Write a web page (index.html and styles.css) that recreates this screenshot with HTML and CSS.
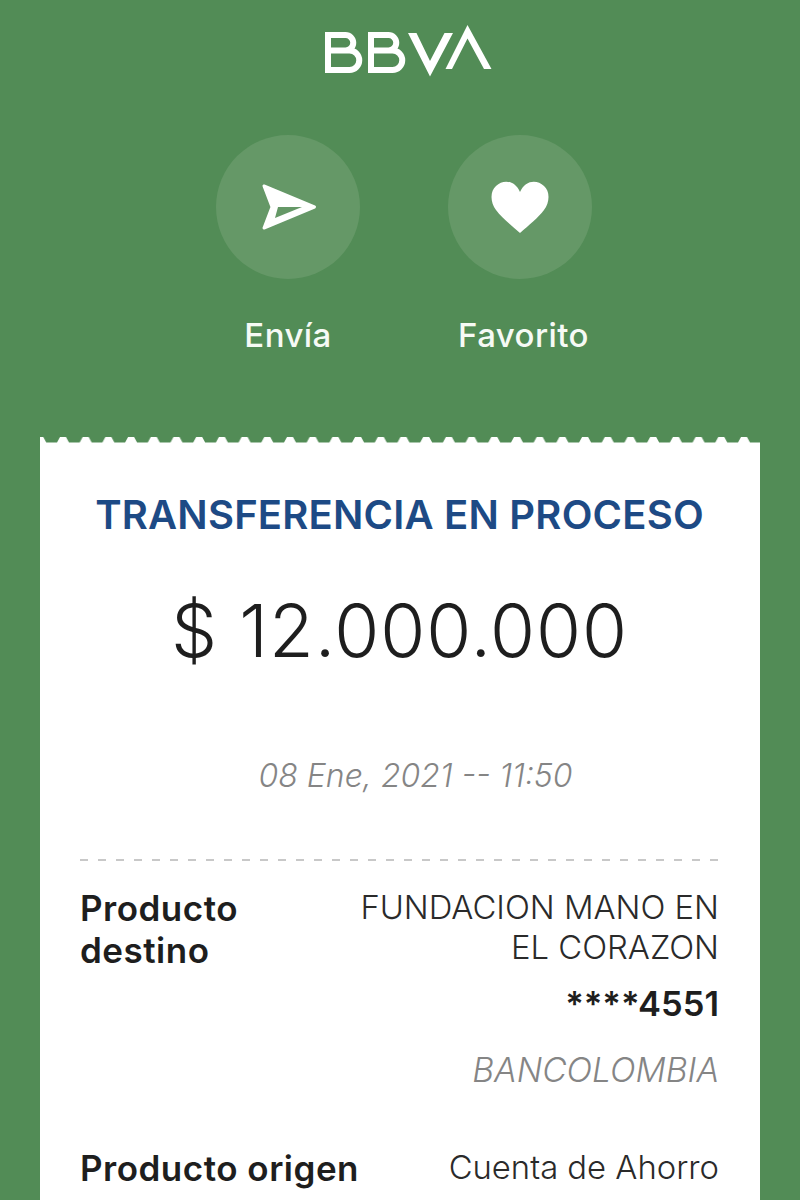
FILE: index.html
```html
<!DOCTYPE html>
<html lang="es">
<head>
<meta charset="utf-8">
<title>BBVA</title>
<link rel="stylesheet" href="styles.css">
</head>
<body>
<main class="screen">
  <header class="brand">
    <svg class="logo" width="168" height="52" viewBox="0 0 168 52" aria-label="BBVA">
      <g fill="none" stroke="#fff" stroke-width="6">
        <path d="M4 10h17.500a7.750 7.750 0 0 1 0 15.500h-17.500zM4 25.500h21.500a9.750 9.750 0 0 1 0 19.500h-21.500z"/>
        <path d="M47 10h17.500a7.750 7.750 0 0 1 0 15.500h-17.500zM47 25.500h21.500a9.750 9.750 0 0 1 0 19.500h-21.500z"/>
      </g>
      <path fill="#fff" d="M84 8h8.500L106 36 120.500 8h8.500L106 51.500z"/>
      <path fill="#fff" d="M143.500 0L167.500 44h-7.500L143.500 13.500 128 44h-6.500z"/>
    </svg>
  </header>
  <nav class="actions">
    <div class="action">
      <span class="circle">
        <svg width="58" height="48" viewBox="0 0 58 48"><path fill="#fff" stroke="#fff" stroke-width="3" stroke-linejoin="round" d="M5 3 L55.500 24 L5 45 L13 24 Z"/><path fill="#659867" d="M19 24 L43 24 L16 35 Z"/></svg>
      </span>
      <span class="label">Envía</span>
    </div>
    <div class="action">
      <span class="circle">
        <svg width="58" height="52" viewBox="0 0 58 52"><path fill="#fff" d="M29 52C20 44 11 37 5 29C-1 21-1 10 5 5C12-2 24-1 29 11C34-1 46-2 53 5C59 10 59 21 53 29C47 37 38 44 29 52Z"/></svg>
      </span>
      <span class="label label-wide">Favorito</span>
    </div>
  </nav>
  <section class="receipt">
    <svg class="teeth" width="720" height="6" aria-hidden="true">
      <defs>
        <pattern id="scallop" width="22.7" height="6" patternUnits="userSpaceOnUse" x="14">
          <path fill="#fff" d="M0 6V5.500H3L6 0H12L15 5.500H22.700V6Z"/>
        </pattern>
      </defs>
      <rect width="720" height="6" fill="url(#scallop)"/>
    </svg>
    <div class="sheet">
      <h1 class="title">TRANSFERENCIA EN PROCESO</h1>
      <p class="amount">$ 12.000.000</p>
      <p class="date">08 Ene, 2021 -- 11:50</p>
      <div class="divider"></div>
      <div class="row">
        <div class="key">Producto destino</div>
        <div class="val">
          <div class="name">FUNDACION MANO EN EL CORAZON</div>
          <div class="acct">****4551</div>
          <div class="bank">BANCOLOMBIA</div>
        </div>
      </div>
      <div class="row row-next">
        <div class="key key-line">Producto origen</div>
        <div class="val"><div class="name">Cuenta de Ahorro</div></div>
      </div>
    </div>
  </section>
</main>
</body>
</html>
```
FILE: styles.css
```css
html, body { margin: 0; padding: 0; height: 100%; overflow: hidden; }
body { background: #528c56; font-family: "Inter", "Liberation Sans", sans-serif; }
.screen { display: flex; flex-direction: column; height: 100vh; overflow: hidden; }
.brand { display: flex; justify-content: center; padding: 25px 0 0 16px; }
.logo { display: block; }
.actions { display: flex; justify-content: center; gap: 88px; margin-top: 58px; padding-left: 8px; }
.action { display: flex; flex-direction: column; align-items: center; width: 144px; gap: 36px; }
.circle { width: 144px; height: 144px; border-radius: 50%; background: #659867; display: flex; align-items: center; justify-content: center; }
.label { color: #f6faf5; font-size: 33px; line-height: 40px; font-weight: 500; letter-spacing: 0.4px; white-space: nowrap; }
.label-wide { padding-left: 7px; }
.receipt { display: flex; flex-direction: column; flex: 1; min-height: 0; margin: 82px 40px 0; }
.teeth { display: block; flex: none; }
.sheet { flex: 1; background: #fff; padding: 0 41px 0 40px; }
.title { margin: 0; padding-top: 48px; text-align: center; color: #1d4a85; font-size: 40px; line-height: 48px; font-weight: 600; letter-spacing: 0.2px; white-space: nowrap; }
.amount { margin: 50px 0 0; text-align: center; color: #1e1e1e; font-size: 73px; line-height: 84px; font-weight: 300; letter-spacing: 0.9px; }
.date { margin: 83px 0 0 32px; text-align: center; color: #858585; font-size: 32px; line-height: 40px; font-style: italic; font-weight: 300; }
.divider { height: 2px; margin-top: 63px; background: repeating-linear-gradient(90deg, #c8c8c8 0 8px, transparent 8px 18px); }
.row { display: flex; justify-content: space-between; margin-top: 26px; }
.row-next { margin-top: 56px; }
.key { width: 240px; color: #1e1e1e; font-size: 35px; line-height: 42px; font-weight: 600; letter-spacing: 0.5px; }
.key-line { white-space: nowrap; }
.val { width: 370px; text-align: right; }
.name { color: #2a2a2a; font-size: 32.800px; line-height: 40px; font-weight: 300; }
.acct { margin-top: 16px; color: #1e1e1e; font-size: 34.500px; line-height: 42px; font-weight: 600; }
.bank { margin-top: 24px; color: #858585; font-size: 33.600px; line-height: 42px; font-style: italic; font-weight: 300; }
```
